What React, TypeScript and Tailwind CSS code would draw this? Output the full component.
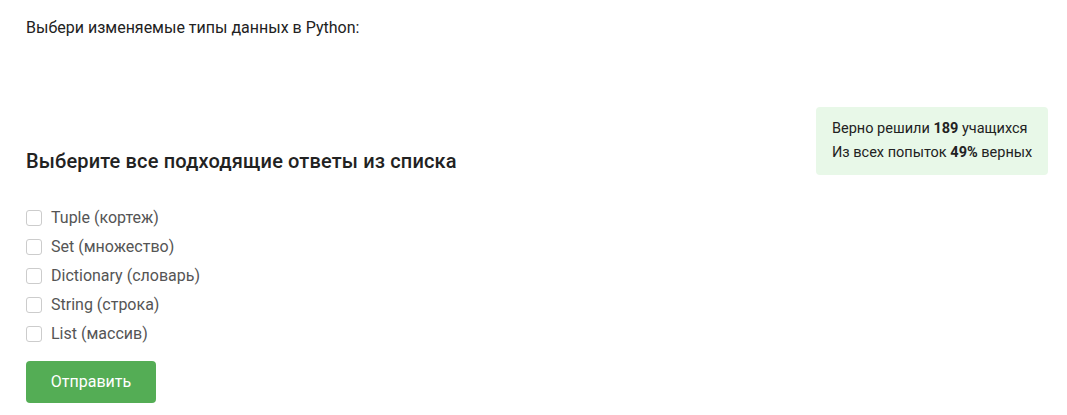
import React, { useState } from 'react';

const options = [
  'Tuple (кортеж)',
  'Set (множество)',
  'Dictionary (словарь)',
  'String (строка)',
  'List (массив)',
];

const App: React.FC = () => {
  const [checked, setChecked] = useState<boolean[]>(options.map(() => false));

  const toggle = (i: number) => {
    setChecked((prev) => prev.map((v, idx) => (idx === i ? !v : v)));
  };

  return (
    <div className="min-h-screen bg-white pl-[26px] pr-[19px] pt-[17px] font-['Roboto',sans-serif] text-[#222]">
      <p className="text-[16px] leading-[22px]">Выбери изменяемые типы данных в Python:</p>

      <div className="mt-[68px] flex justify-between">
        <h2 className="pt-[41px] text-[20px] font-medium leading-[26px] tracking-[0.15px] text-[#222]">
          Выберите все подходящие ответы из списка
        </h2>
        <div className="h-[68px] w-[232px] whitespace-nowrap rounded-[4px] bg-[#e8f8e8] px-4 py-[10px] text-[14.5px] leading-[24px] text-[#222]">
          <div>
            Верно решили <b className="font-bold">189</b> учащихся
          </div>
          <div>
            Из всех попыток <b className="font-bold">49%</b> верных
          </div>
        </div>
      </div>

      <div className="mt-[28px] flex flex-col">
        {options.map((label, i) => (
          <label key={label} className="flex h-[29px] cursor-pointer items-center gap-[9px]">
            <span
              onClick={() => toggle(i)}
              className={`h-4 w-4 rounded-[3px] border ${
                checked[i] ? 'border-[#4cae4f] bg-[#4cae4f]' : 'border-[#ccc] bg-white'
              }`}
            />
            <span className="text-[16px] text-[#555]">{label}</span>
          </label>
        ))}
      </div>

      <button className="mt-[13px] h-[42px] w-[130px] rounded-[4px] bg-[#54ad55] text-[16px] text-white">
        Отправить
      </button>
    </div>
  );
};

export default App;
